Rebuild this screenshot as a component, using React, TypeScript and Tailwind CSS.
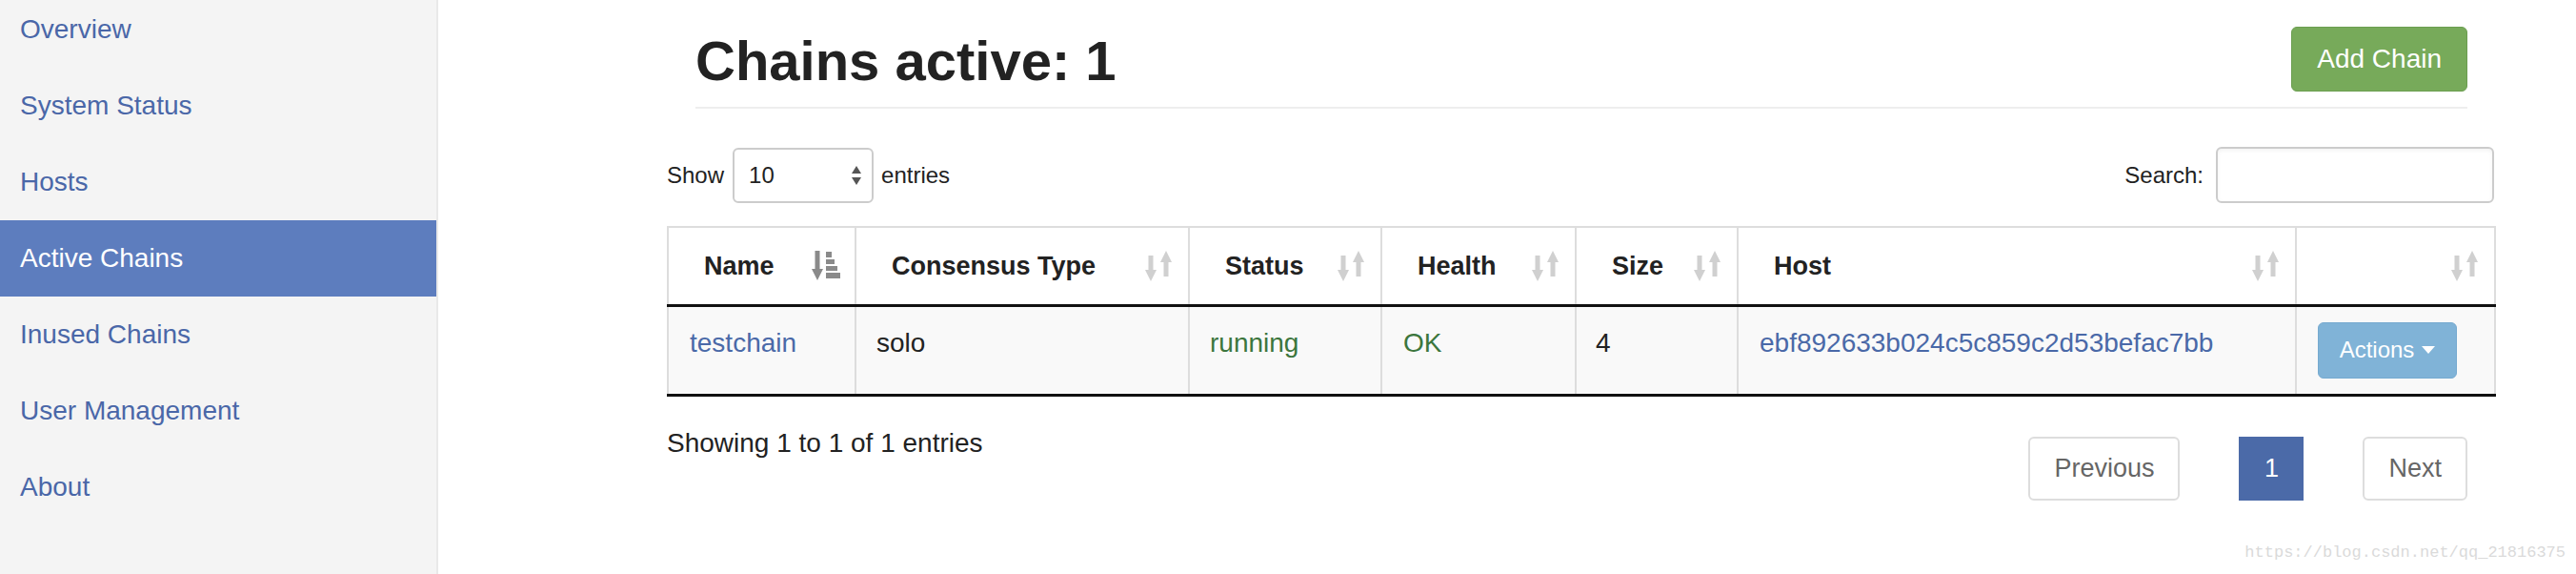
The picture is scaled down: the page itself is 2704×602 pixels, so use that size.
import React from 'react';

const navItems = ['Overview', 'System Status', 'Hosts', 'Active Chains', 'Inused Chains', 'User Management', 'About'];

const SortIcon: React.FC<{ active?: boolean }> = ({ active }) => {
  if (active) {
    return (
      <svg width="30" height="31" viewBox="0 0 30 31" className="shrink-0">
        <g fill="#8a8a8a">
          <rect x="3.5" y="0" width="5" height="21" />
          <polygon points="0,19 12,19 6,31" />
          <rect x="15" y="1" width="6" height="6" />
          <rect x="15" y="9" width="9" height="5" />
          <rect x="15" y="16" width="12" height="5" />
          <rect x="15" y="23" width="15" height="6" />
        </g>
      </svg>
    );
  }
  return (
    <svg width="28" height="32" viewBox="0 0 28 32" className="shrink-0">
      <g fill="#d0d0d0">
        <rect x="3.5" y="5" width="5" height="17" />
        <polygon points="0,20 12,20 6,32" />
        <rect x="19.5" y="10" width="5" height="17" />
        <polygon points="16,12 28,12 22,0" />
      </g>
    </svg>
  );
};

const columns = [
  { label: 'Name', width: 'w-[197px]', active: true },
  { label: 'Consensus Type', width: 'w-[350px]' },
  { label: 'Status', width: 'w-[202px]' },
  { label: 'Health', width: 'w-[204px]' },
  { label: 'Size', width: 'w-[170px]' },
  { label: 'Host', width: 'w-[586px]' },
  { label: '', width: 'w-[209px]' },
];

export default function App() {
  return (
    <div className="relative flex h-[602px] w-full overflow-hidden bg-white font-['Liberation_Sans',Arial,sans-serif] text-[#222]">
      {/* sidebar */}
      <aside className="w-[460px] shrink-0 border-r-2 border-[#e9e9e9] bg-[#f4f4f4]">
        <ul className="mt-[-9px]">
          {navItems.map((item) => (
            <li
              key={item}
              className={
                item === 'Active Chains'
                  ? 'flex h-[80px] items-center bg-[#5d7dbe] pl-[21px] text-[28px] text-white'
                  : 'flex h-[80px] items-center pl-[21px] text-[28px] text-[#4a67a8]'
              }
            >
              {item}
            </li>
          ))}
        </ul>
      </aside>

      {/* main */}
      <main className="flex-1 pl-[240px]">
        <div className="w-[1918px]">
          <div className="ml-[30px] mr-[28px] flex h-[114px] items-start justify-between border-b-2 border-[#eee]">
            <h1 className="mt-[30px] text-[58px] font-bold leading-[68px] text-[#222]">Chains active: 1</h1>
            <button className="mt-[28px] h-[68px] rounded-[6px] border border-[#6b9e50] bg-[#77aa5a] px-[26px] text-[28px] text-white">
              Add Chain
            </button>
          </div>

          <div className="mt-[40px] flex h-[59px] items-center justify-between">
            <div className="flex items-center text-[24px]">
              <span>Show</span>
              <div className="ml-[9px] flex h-[58px] w-[148px] items-center justify-between rounded-[6px] border-2 border-[#ccc] pl-[15px] pr-[11px]">
                <span>10</span>
                <svg width="10" height="20" viewBox="0 0 10 20">
                  <polygon points="0,8 10,8 5,0" fill="#555" />
                  <polygon points="0,12 10,12 5,20" fill="#555" />
                </svg>
              </div>
              <span className="ml-[8px]">entries</span>
            </div>
            <div className="flex items-center text-[24px]">
              <span>Search:</span>
              <input className="ml-[13px] h-[59px] w-[292px] rounded-[6px] border-2 border-[#ccc] shadow-inner outline-none" />
            </div>
          </div>

          <table className="mt-[24px] w-[1918px] table-fixed border-collapse">
            <colgroup>
              {columns.map((c, i) => (
                <col key={i} className={c.width} />
              ))}
            </colgroup>
            <thead>
              <tr>
                {columns.map((c, i) => (
                  <th key={i} className="h-[82px] border-2 border-b-[3px] border-[#ddd] border-b-[#111] p-0 text-left">
                    <div className={c.active ? 'flex items-center pl-[37px] pr-[15px]' : 'flex items-center pl-[37px] pr-[17px]'}>
                      <span className="text-[27px] font-bold">{c.label}</span>
                      <span className="ml-auto">
                        <SortIcon active={c.active} />
                      </span>
                    </div>
                  </th>
                ))}
              </tr>
            </thead>
            <tbody>
              <tr className="bg-[#f9f9f9] text-[28px] leading-[40px]">
                <td className="border-x-2 border-b-[3px] border-[#ddd] border-b-[#111] pl-[22px] pt-[18px] align-top text-[#4a69a8]">testchain</td>
                <td className="border-x-2 border-b-[3px] border-[#ddd] border-b-[#111] pl-[21px] pt-[18px] align-top">solo</td>
                <td className="border-x-2 border-b-[3px] border-[#ddd] border-b-[#111] pl-[21px] pt-[18px] align-top text-[#3c763d]">running</td>
                <td className="border-x-2 border-b-[3px] border-[#ddd] border-b-[#111] pl-[22px] pt-[18px] align-top text-[#3c763d]">OK</td>
                <td className="border-x-2 border-b-[3px] border-[#ddd] border-b-[#111] pl-[20px] pt-[18px] align-top">4</td>
                <td className="border-x-2 border-b-[3px] border-[#ddd] border-b-[#111] pl-[22px] pt-[18px] align-top text-[#4a69a8]">ebf892633b024c5c859c2d53befac7bb</td>
                <td className="border-x-2 border-b-[3px] border-[#ddd] border-b-[#111] py-[16px] pl-[22px] align-top">
                  <button className="flex h-[59px] w-[146px] items-center justify-center gap-[8px] rounded-[6px] border border-[#76aad0] bg-[#80b3d7] text-[24px] text-white">
                    Actions
                    <svg width="14" height="8" viewBox="0 0 14 8">
                      <polygon points="0,0 14,0 7,8" fill="#fff" />
                    </svg>
                  </button>
                </td>
              </tr>
            </tbody>
          </table>

          <div className="flex items-start justify-between">
            <div className="mt-[29px] text-[28px] leading-[40px]">Showing 1 to 1 of 1 entries</div>
            <div className="mr-[28px] mt-[42px] flex gap-[62px] text-[27px]">
              <span className="flex h-[67px] items-center rounded-[6px] border-2 border-[#ddd] px-[25px] text-[#666]">Previous</span>
              <span className="flex h-[67px] w-[68px] items-center justify-center bg-[#4b6aa8] text-white">1</span>
              <span className="flex h-[67px] items-center rounded-[6px] border-2 border-[#ddd] px-[25px] text-[#666]">Next</span>
            </div>
          </div>
        </div>
      </main>

      <span className="absolute bottom-[10px] right-[11px] font-['Liberation_Mono',monospace] text-[17px] text-[#dadada]">
        https://blog.csdn.net/qq_21816375
      </span>
    </div>
  );
}
